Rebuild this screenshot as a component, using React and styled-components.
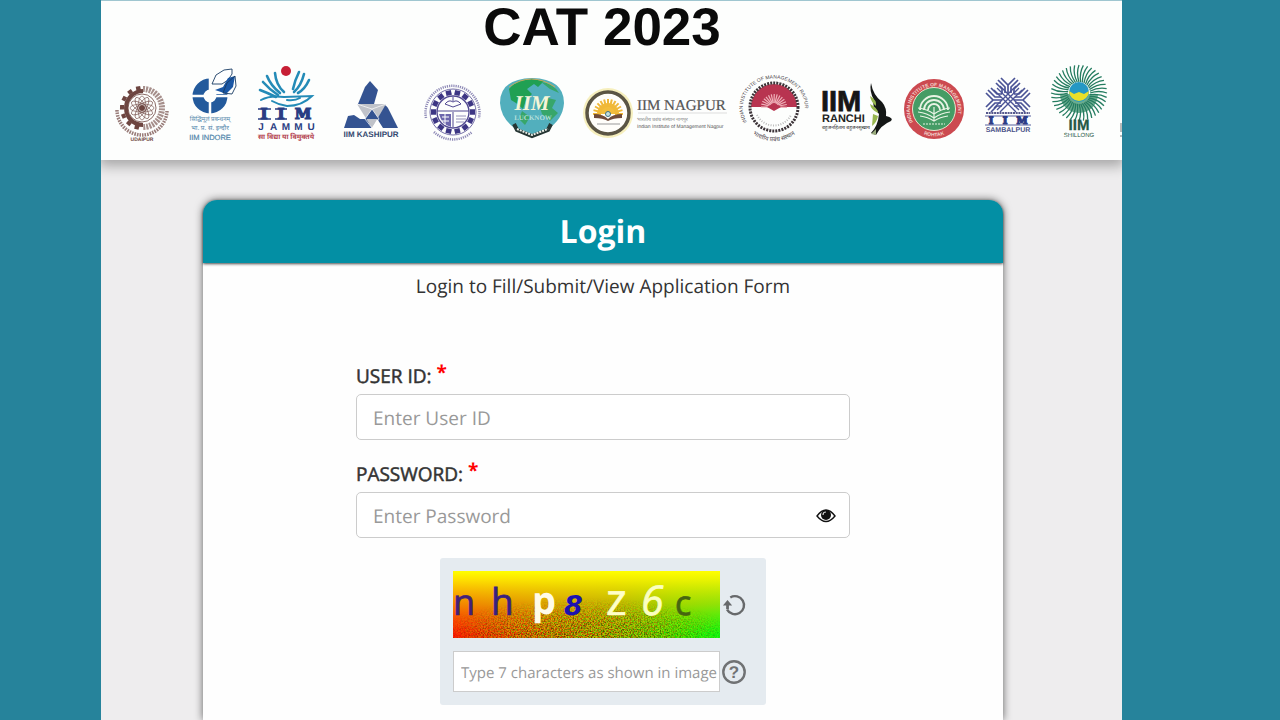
import React, { useState } from 'react'
import styled, { createGlobalStyle } from 'styled-components'

const GlobalStyle = createGlobalStyle`
  * {
    box-sizing: border-box;
    text-rendering: geometricPrecision;
  }

  body {
    margin: 0;
    background: #26839b;
    font-family: 'Open Sans', sans-serif;
    color: #333;
  }
`

const Shell = styled.div`
  display: grid;
  grid-template-columns: 101fr 1021fr 158fr;
  min-height: 100vh;
`

const Page = styled.div`
  grid-column: 2;
  display: flex;
  flex-direction: column;
  min-width: 0;
  overflow: hidden;
  background: #eeedee;
`

const Header = styled.header`
  position: relative;
  height: 160px;
  border-top: 1px solid #9fc6d0;
  background: #fdfefd;
  box-shadow: 0 4px 12px 2px rgba(0, 0, 0, 0.3);
`

const Title = styled.h1`
  margin: 0;
  padding-right: 19px;
  font: bold 53px/54px 'Liberation Sans', sans-serif;
  text-align: center;
  color: #0a0a0a;
`

const LogoRow = styled.div`
  display: flex;
  justify-content: space-between;
  padding-top: 7px;
`

const LogoSvg = styled.svg`
  display: block;
  flex: none;
`

const Main = styled.main`
  display: flex;
  flex: 1;
  justify-content: center;
  padding: 40px 17px 0 0;
`

const Card = styled.section`
  width: 800px;
  border-radius: 14px 14px 0 0;
  background: #fefefe;
  box-shadow: 0 0 8px rgba(0, 0, 0, 0.6);
`

const CardTitle = styled.h2`
  margin: 0;
  border-radius: 14px 14px 0 0;
  background: #038fa4;
  box-shadow: 0 1px 3px rgba(0, 0, 0, 0.7);
  font-size: 32px;
  line-height: 63px;
  text-align: center;
  color: #fff;
`

const Intro = styled.p`
  margin: 0;
  padding-top: 8px;
  font-size: 19px;
  line-height: 30px;
  text-align: center;
`

const Form = styled.form`
  display: flex;
  flex-direction: column;
  width: 494px;
  margin: 61px auto 0;
`

const Field = styled.div`
  margin-bottom: 20px;
`

const Label = styled.label`
  display: block;
  height: 32px;
  font-size: 19px;
  line-height: 28px;
  color: #333;
  -webkit-text-stroke: 0.5px #333;
`

const Required = styled.sup`
  font-size: 19px;
  font-weight: bold;
  line-height: 0;
  vertical-align: 4px;
  color: #f00;
  -webkit-text-stroke: 0;
`

const InputBox = styled.div`
  display: flex;
  align-items: center;
  height: 46px;
  padding: 2px 13px 0 16px;
  border: 1px solid #ccc;
  border-radius: 5px;
  background: #fff;
`

const Input = styled.input`
  flex: 1;
  min-width: 0;
  padding: 0;
  border: 0;
  outline: 0;
  background: none;
  font: 19px 'Open Sans', sans-serif;
  color: #333;

  &::placeholder {
    color: #999;
  }
`

const IconButton = styled.button`
  display: flex;
  padding: 0;
  border: 0;
  background: none;
  cursor: pointer;
`

const Captcha = styled.div`
  display: grid;
  grid-template-columns: 267px 24px;
  gap: 13px 2px;
  align-items: center;
  align-self: center;
  width: 326px;
  padding: 13px;
  border-radius: 3px;
  background: #e5ebf0;
`

const CaptchaInput = styled.input`
  width: 100%;
  height: 41px;
  padding: 2px 0 0 7px;
  border: 1px solid #ccc;
  outline: 0;
  background: #fff;
  font: 15px 'Open Sans', sans-serif;
  color: #333;

  &::placeholder {
    color: #999;
  }
`

const range = n => Array.from({ length: n }, (_, i) => i)

const Spokes = ({ cx, cy, from, to, count, start = 0, sweep = 360, ...rest }) => (
  <g {...rest}>
    {range(count).map(i => {
      const a = ((start + (i * sweep) / count) * Math.PI) / 180
      return (
        <line
          key={i}
          x1={cx + Math.cos(a) * from}
          y1={cy + Math.sin(a) * from}
          x2={cx + Math.cos(a) * to}
          y2={cy + Math.sin(a) * to}
        />
      )
    })}
  </g>
)

const Logo = ({ width, label, children }) => (
  <LogoSvg width={width} height={84} viewBox={`0 0 ${width} 84`} role='img' aria-label={label}>
    {children}
  </LogoSvg>
)

const sans = 'Liberation Sans, sans-serif'
const serif = 'Liberation Serif, serif'
const slab = 'DejaVu Serif, serif'
const hindi = 'Noto Sans, sans-serif'

const Udaipur = () => (
  <Logo width={79} label='IIM Udaipur'>
    <g fill='none' stroke='#6d4540'>
      <path d='M42 29A17 17 0 0 0 42 63' strokeWidth='4' />
      <Spokes cx={41} cy={46} from={18} to={22} count={7} start={105} sweep={180} strokeWidth='4.5' />
      <path d='M42 27A19 19 0 0 1 42 65' strokeWidth='6' strokeDasharray='2 1' opacity='.6' />
      <circle cx='41' cy='46' r='14' strokeWidth='.8' />
      {range(6).map(i => (
        <ellipse key={i} cx='41' cy='46' rx='4' ry='12' strokeWidth='.6' transform={`rotate(${i * 30} 41 46)`} />
      ))}
      <path d='M16 48A25 25 0 0 0 66 48' strokeWidth='3.5' strokeDasharray='1.6 1' opacity='.7' />
    </g>
    <circle cx='41' cy='46' r='3' fill='#6d4540' />
    <text x='41' y='79' textAnchor='middle' fontFamily={sans} fontSize='5' fontWeight='bold' fill='#6d4540'>UDAIPUR</text>
  </Logo>
)

const Indore = () => (
  <Logo width={70} label='IIM Indore'>
    <circle cx='30' cy='34' r='12' fill='none' stroke='#235a9c' strokeWidth='11' />
    <path d='M30 15v38M11 34h38' stroke='#fdfefd' strokeWidth='2.5' />
    <path d='M31 12h20v20H31z' fill='#fdfefd' />
    <path d='M32 22l4-9 8-5 8-1v5l-4 6-6 4z' fill='#fff' stroke='#173b63' strokeWidth='.9' />
    <path d='M35 28l8-3 5-9 7-2-2 11-7 7-5-2z' fill='#1a57a5' />
    <path d='M43 31l4-10 8-7 1 10-4 8z' fill='none' stroke='#173b63' strokeWidth='.9' />
    <g fontFamily={hindi} fill='#5286ab' textAnchor='middle'>
      <text x='30' y='59' fontSize='6'>सिद्धिमूलं प्रबन्धनम्</text>
      <text x='30' y='68' fontSize='6.5'>भा. प्र. सं. इन्दौर</text>
      <text x='30' y='78' fontSize='7.5' fontFamily={sans} stroke='#5286ab' strokeWidth='.2'>IIM INDORE</text>
    </g>
  </Logo>
)

const Jammu = () => (
  <Logo width={72} label='IIM Jammu'>
    <circle cx='36' cy='9' r='5' fill='#c71f35' />
    <g fill='none' stroke='#248bb7' strokeWidth='2.6' strokeLinecap='round'>
      <path d='M17 14Q21 24 30 31M13 20Q20 28 28 33M10 28Q18 31 26 35M25 11Q26 23 34 30' />
      <path d='M54 12Q51 24 44 30M49 10Q45 18 43 27M59 18Q55 27 48 31' />
      <path d='M11 38Q20 33 34 35L62 34Q52 44 37 44Q29 43 22 39M37 38Q45 39 50 36' strokeWidth='2' />
    </g>
    <g textAnchor='middle' fontFamily={slab} fontWeight='bold' fontSize='15' stroke='#293d83' strokeWidth='1.2' fill='#293d83'>
      <text x='14' y='57'>I</text>
      <text x='31' y='57'>I</text>
      <text x='53' y='57'>M</text>
    </g>
    <path d='M8 47h13M25 47h12M8 57h13M25 57h12' stroke='#293d83' strokeWidth='1.4' />
    <g fill='#293d83' fontFamily={sans} fontWeight='bold' fontSize='10' textAnchor='middle'>
      {['J', 'A', 'M', 'M', 'U'].map((c, i) => <text key={i} x={11 + i * 12.5} y='68'>{c}</text>)}
    </g>
    <text x='36' y='77' textAnchor='middle' fontFamily={hindi} fontWeight='bold' fontSize='7' fill='#b54752'>सा विद्या या विमुक्तये</text>
  </Logo>
)

const Kashipur = () => (
  <Logo width={90} label='IIM Kashipur'>
    <path d='M43 25l5-6 8 9-4 14H36z' fill='#345391' />
    <path d='M22 66l4-12 6-1 6 4h7l5 9z' fill='#345391' />
    <path d='M60 42q5 1 7 6l9 18H61l-7-11z' fill='#345391' />
    <path d='M35 42h29L50 66z' fill='#bfc2c9' />
    <path d='M50 47l7 10H43z' fill='#345391' />
    <path d='M35 42l15 5 14-5M50 47l-7 10 7 9 7-9z' fill='none' stroke='#fff' strokeWidth='.7' />
    <text x='49' y='75' textAnchor='middle' fontFamily={sans} fontWeight='bold' fontSize='8' fill='#344970'>IIM KASHIPUR</text>
  </Logo>
)

const Bodhgaya = () => (
  <Logo width={80} label='Indian Institute of Management'>
    <g fill='none' stroke='#514991'>
      <path d='M14 56A27 27 0 1 1 67 56' strokeWidth='2.5' strokeDasharray='1.2 1' opacity='.65' />
      <path d='M22 70A28 28 0 0 0 60 70' strokeWidth='2.5' strokeDasharray='1.2 1' opacity='.65' />
      <circle cx='41' cy='50' r='23' strokeWidth='.8' />
      <Spokes cx={41} cy={50} from={17} to={22} count={14} strokeWidth='5.5' stroke='#3d3684' />
      <circle cx='41' cy='50' r='16' strokeWidth='1.4' />
      <path d='M25 49h32M41 50v15M33 42q4-5 8-2q4-3 8 2l-8 3zM41 35v4' />
      <path d='M44 54h10M44 57h10M44 60h8' opacity='.6' />
    </g>
    <path d='M27 52h12v13Q30 63 27 52z' fill='#6d66ad' />
    <path d='M30 55h7M30 59h7M33 52v11' stroke='#fff' />
  </Logo>
)

const Lucknow = () => (
  <Logo width={82} label='IIM Lucknow'>
    <path d='M8 41Q8 17 40 16Q72 17 72 41Q71 57 56 67L40 73L24 67Q9 57 8 41z' fill='#52afbd' />
    <path d='M17 27Q25 17 40 17L52 19L46 25L42 22L35 27L40 32L34 38L31 47L24 41L19 38z' fill='#20a053' />
    <path d='M49 20Q61 21 67 31L58 27zM47 42L56 36L64 38L60 46L66 51L58 59L50 52zM30 49L38 55L33 63L27 57z' fill='#37a66a' />
    <path d='M17 25Q39 9 63 25' fill='none' stroke='#c5aa5d' />
    <text x='40' y='48' textAnchor='middle' fontFamily={serif} fontWeight='bold' fontStyle='italic' fontSize='21' fill='#f5f5d8'>IIM</text>
    <text x='41' y='58' textAnchor='middle' fontFamily={serif} fontWeight='bold' fontSize='7' fill='#b5dfda'>LUCKNOW</text>
    <path d='M22 62l3 6 15 6 16-6 3-6' fill='none' stroke='#263634' strokeWidth='4' />
    <path d='M25 67l15 6 16-6' fill='none' stroke='#e9eee8' strokeWidth='2' strokeDasharray='2 1' />
  </Logo>
)

const Nagpur = () => (
  <Logo width={160} label='IIM Nagpur'>
    <circle cx='34' cy='51' r='25' fill='#f6efbd' />
    <circle cx='34' cy='51' r='21' fill='#fffefa' stroke='#5b5544' strokeWidth='3.5' />
    <path d='M23 52A11 11 0 0 1 45 52z' fill='#f2bd3c' />
    <Spokes cx={34} cy={52} from={7} to={15} count={13} start={180} sweep={195} stroke='#f0b838' strokeWidth='2' />
    <path d='M20 52q9 0 14 5q5-5 14-5v4q-9 0-14 3q-5-3-14-3z' fill='#704b39' />
    <circle cx='34' cy='52' r='2.5' fill='#c7e0dc' stroke='#3e7084' />
    <path d='M23 62h23' stroke='#999' />
    <text x='63' y='48' fontFamily={serif} fontSize='15' fill='#555' stroke='#555' strokeWidth='.2'>IIM NAGPUR</text>
    <path d='M64 51h89' stroke='#ddd' />
    <text x='63' y='59' fontFamily={hindi} fontSize='5' fill='#888'>भारतीय प्रबंध संस्थान नागपुर</text>
    <text x='63' y='66' fontFamily={sans} fontSize='5' fill='#555'>Indian Institute of Management Nagpur</text>
  </Logo>
)

const Raipur = () => (
  <Logo width={78} label='IIM Raipur'>
    <defs>
      <path id='raipurTop' d='M13 60A31 29 0 1 1 66 61' />
      <path id='raipurBottom' d='M13 66A34 34 0 0 0 67 66' />
    </defs>
    <path d='M17 45A23 23 0 0 1 63 45z' fill='#b83450' />
    <circle cx='40' cy='45' r='24' fill='none' stroke='#3c3338' strokeWidth='3' strokeDasharray='2 1.1' />
    <Spokes cx={40} cy={45} from={4} to={13} count={15} start={180} sweep={195} stroke='#efb1b9' strokeWidth='1.2' />
    <path d='M33 45q4-4 7 0q4-4 7 0l-7 4z' fill='#b83450' />
    <path d='M23 53A19 19 0 0 0 57 53' fill='none' stroke='#bbb' strokeWidth='2' strokeDasharray='1 1.5' />
    <g fontFamily={sans} fontSize='5' fill='#4a4348'>
      <text><textPath href='#raipurTop'>INDIAN INSTITUTE OF MANAGEMENT RAIPUR</textPath></text>
      <text fontFamily={hindi} fontSize='6' textAnchor='middle'>
        <textPath href='#raipurBottom' startOffset='50%'>भारतीय प्रबंध संस्थान</textPath>
      </text>
    </g>
  </Logo>
)

const Ranchi = () => (
  <Logo width={86} label='IIM Ranchi'>
    <text x='9' y='49' fontFamily={sans} fontWeight='bold' fontSize='29' stroke='#161616' strokeWidth='.8' fill='#161616'>IIM</text>
    <text x='10' y='60' fontFamily={sans} fontWeight='bold' fontSize='11' fill='#222'>RANCHI</text>
    <text x='10' y='67' fontFamily={hindi} fontSize='5' fill='#222'>बहुजनहिताय बहुजनसुखाय</text>
    <path d='M59 21Q61 33 70 40Q75 46 74 54Q82 56 79 59Q69 63 64 73L59 71Q66 64 67 52Q59 44 62 38Q57 29 59 21z' fill='#141716' />
    <path d='M58 34Q65 38 64 44Q59 40 58 34zM58 42Q66 46 66 51Q59 48 58 42zM61 52L66 54Q65 60 60 64z' fill='#98b750' />
    <path d='M59 72l5-5 0 6z' fill='#9aac7e' />
  </Logo>
)

const Rohtak = () => (
  <Logo width={72} label='IIM Rohtak'>
    <defs>
      <path id='rohtakTop' d='M15 60A24 24 0 1 1 58 58' />
      <path id='rohtakBottom' d='M16 66A28 28 0 0 0 56 66' />
    </defs>
    <circle cx='36' cy='47' r='30' fill='#cc4a50' />
    <circle cx='36' cy='47' r='21.5' fill='#459c65' stroke='#e8e6cf' />
    <g fill='none' stroke='#e8f3e4' strokeWidth='1.2'>
      <path d='M22 48A14 14 0 0 1 50 48M26 48A10 10 0 0 1 46 48M30 48A6 6 0 0 1 42 48' strokeWidth='1.8' />
      <path d='M20 46q9 1 16 6q7-5 16-6M20 50q9 1 16 6q7-5 16-6M22 54q8 1 14 5q6-4 14-5M36 45v14' />
      <path d='M25 62h22' strokeDasharray='2 1' />
    </g>
    <g fontFamily={sans} fontWeight='bold' fontSize='5' fill='#f3d4cd'>
      <text><textPath href='#rohtakTop'>INDIAN INSTITUTE OF MANAGEMENT</textPath></text>
      <text textAnchor='middle'><textPath href='#rohtakBottom' startOffset='50%'>ROHTAK</textPath></text>
    </g>
  </Logo>
)

const Sambalpur = () => (
  <Logo width={76} label='IIM Sambalpur'>
    <g fill='none' stroke='#4a5396' strokeWidth='1.7'>
      {[-90, 0, 90].map(turn => (
        <path
          key={turn}
          d='M26 21l6 6v5M28 18l7 7v6M31 16l7 7 7-7M48 18l-7 7v6M50 21l-6 6v5M38 23v9'
          transform={`rotate(${turn} 38 38)`}
        />
      ))}
      <path d='M27 48l22-22M30 50l22-22M24 46l22-22M49 48L27 26M46 50L24 28M52 46L30 24' strokeWidth='1.3' />
    </g>
    <path d='M16 51h44' stroke='#56598c' strokeWidth='2' strokeDasharray='2 .7' />
    <g textAnchor='middle' fontFamily={slab} fontWeight='bold' fontSize='10' stroke='#2e3b85' strokeWidth='1.2' fill='#2e3b85'>
      <text x='21' y='62'>I</text>
      <text x='35' y='62'>I</text>
      <text x='52' y='62'>M</text>
    </g>
    <path d='M15 54h46M15 63h46' stroke='#2e3b85' strokeWidth='.8' />
    <text x='38' y='70' textAnchor='middle' fontFamily={sans} fontWeight='bold' fontSize='7' fill='#4b5288'>SAMBALPUR</text>
  </Logo>
)

const Shillong = () => (
  <Logo width={68} label='IIM Shillong'>
    <path d='M14 32A19 19 0 0 0 52 32z' fill='#1d8055' opacity='.65' />
    <g fill='none' stroke='#257c60' strokeWidth='1.3'>
      {range(40).map(i => (
        <path key={i} d='M33 20Q30 11 33 3' transform={`rotate(${i * 9} 33 31)`} />
      ))}
    </g>
    <circle cx='33' cy='30' r='10' fill='#2498c4' />
    <path d='M23 29l5 3 5-2 5 2 5-3A10 10 0 1 1 23 29z' fill='#e9df27' />
    <text x='33' y='68' textAnchor='middle' fontFamily={sans} fontWeight='bold' fontSize='15' fill='#255846' stroke='#255846' strokeWidth='.3'>IIM</text>
    <text x='33' y='75' textAnchor='middle' fontFamily={sans} fontSize='6' fill='#255846'>SHILLONG</text>
  </Logo>
)

const NextLogo = () => (
  <Logo width={8} label='Next institute'>
    <path d='M7 61v9M6 74h2' stroke='#777' />
  </Logo>
)

const CaptchaImage = () => (
  <svg width='267' height='67' viewBox='0 0 267 67' role='img' aria-label='Captcha'>
    <defs>
      <linearGradient id='base'>
        <stop offset='0' stopColor='#ff1000' />
        <stop offset='.3' stopColor='#c85000' />
        <stop offset='.6' stopColor='#7f9000' />
        <stop offset='.85' stopColor='#25e800' />
        <stop offset='1' stopColor='#00ff10' />
      </linearGradient>
      <linearGradient id='top' x2='0' y2='1'>
        <stop offset='0' stopColor='#ff0' />
        <stop offset='.12' stopColor='#fff400' stopOpacity='.92' />
        <stop offset='.5' stopColor='#efd000' stopOpacity='.6' />
        <stop offset='.95' stopColor='#efc800' stopOpacity='0' />
      </linearGradient>
      <radialGradient id='fade' cx='.5' cy='1' r='.6'>
        <stop offset='0' stopColor='#ddd' />
        <stop offset='.5' stopColor='#999' />
        <stop offset='1' stopColor='#000' />
      </radialGradient>
      <mask id='grainMask'>
        <rect width='267' height='67' fill='url(#fade)' />
      </mask>
      <filter id='grain' x='0' y='0' width='1' height='1' colorInterpolationFilters='sRGB'>
        <feTurbulence type='fractalNoise' baseFrequency='.7' numOctaves='2' seed='7' />
        <feColorMatrix values='4 0 0 0 -1.3  0 4 0 0 -1.4  0 0 0 0 0  0 0 0 0 .6' />
      </filter>
    </defs>
    <rect width='267' height='67' fill='url(#base)' />
    <rect width='267' height='67' fill='url(#top)' />
    <rect width='267' height='67' filter='url(#grain)' mask='url(#grainMask)' />
    <g fontFamily='Open Sans, sans-serif' strokeWidth='.7'>
      <text x='0' y='44' fontSize='36' fill='#432079' stroke='#432079'>n</text>
      <text x='38' y='44' fontSize='37' fill='#392080' stroke='#392080'>h</text>
      <text x='79' y='43' fontSize='38' fontWeight='bold' fill='#fffbe8'>p</text>
      <text x='111' y='44' fontSize='27' fontWeight='bold' fontStyle='italic' fontFamily='DejaVu Sans, sans-serif' fill='#1c12b0'>8</text>
      <text x='153' y='44' fontSize='44' fill='#ffffc8' stroke='#ffffc8'>z</text>
      <text x='188' y='44' fontSize='41' fontStyle='italic' fill='#fbffc0' stroke='#fbffc0'>6</text>
      <text x='222' y='44' fontSize='34' fill='#466510' stroke='#466510'>c</text>
    </g>
  </svg>
)

const EyeIcon = () => (
  <svg width='20' height='16' viewBox='0 0 20 16' aria-hidden='true'>
    <path d='M1 8Q10-4 19 8Q10 19 1 8z' fill='#fff' stroke='#111' strokeWidth='1.4' />
    <circle cx='10' cy='7' r='5' fill='#111' />
    <path d='M7 7q0-3 3-3' fill='none' stroke='#ccc' strokeWidth='1.2' />
  </svg>
)

const RefreshIcon = () => (
  <svg width='26' height='24' viewBox='0 0 26 24' aria-hidden='true'>
    <path d='M9 3.8A9.8 9.8 0 1 1 5.5 17' fill='none' stroke='#67696b' strokeWidth='2.6' />
    <path d='M1 12.5l5-6 5 6H7.5v4H4.5v-4z' fill='#67696b' />
  </svg>
)

const HelpIcon = () => (
  <svg width='24' height='24' viewBox='0 0 24 24' aria-hidden='true'>
    <circle cx='12' cy='12' r='10.7' fill='none' stroke='#707274' strokeWidth='2.4' />
    <text x='12' y='18' textAnchor='middle' fontFamily={sans} fontWeight='bold' fontSize='17' fill='#707274'>?</text>
  </svg>
)

const App = () => {
  const [userId, setUserId] = useState('')
  const [password, setPassword] = useState('')
  const [captcha, setCaptcha] = useState('')
  const [visible, setVisible] = useState(false)

  return (
    <Shell>
      <GlobalStyle />
      <Page>
        <Header>
          <Title>CAT 2023</Title>
          <LogoRow>
            <Udaipur />
            <Indore />
            <Jammu />
            <Kashipur />
            <Bodhgaya />
            <Lucknow />
            <Nagpur />
            <Raipur />
            <Ranchi />
            <Rohtak />
            <Sambalpur />
            <Shillong />
            <NextLogo />
          </LogoRow>
        </Header>
        <Main>
          <Card>
            <CardTitle>Login</CardTitle>
            <Intro>Login to Fill/Submit/View Application Form</Intro>
            <Form onSubmit={e => e.preventDefault()}>
              <Field>
                <Label htmlFor='userId'>USER ID: <Required>*</Required></Label>
                <InputBox>
                  <Input
                    id='userId'
                    type='text'
                    placeholder='Enter User ID'
                    value={userId}
                    onChange={e => setUserId(e.target.value)}
                  />
                </InputBox>
              </Field>
              <Field>
                <Label htmlFor='password'>PASSWORD: <Required>*</Required></Label>
                <InputBox>
                  <Input
                    id='password'
                    type={visible ? 'text' : 'password'}
                    placeholder='Enter Password'
                    value={password}
                    onChange={e => setPassword(e.target.value)}
                  />
                  <IconButton type='button' aria-label='Show password' onClick={() => setVisible(!visible)}>
                    <EyeIcon />
                  </IconButton>
                </InputBox>
              </Field>
              <Captcha>
                <CaptchaImage />
                <IconButton type='button' aria-label='New captcha'>
                  <RefreshIcon />
                </IconButton>
                <CaptchaInput
                  type='text'
                  aria-label='Captcha text'
                  placeholder='Type 7 characters as shown in image'
                  value={captcha}
                  onChange={e => setCaptcha(e.target.value)}
                />
                <IconButton type='button' aria-label='Captcha help'>
                  <HelpIcon />
                </IconButton>
              </Captcha>
            </Form>
          </Card>
        </Main>
      </Page>
    </Shell>
  )
}

export default App
